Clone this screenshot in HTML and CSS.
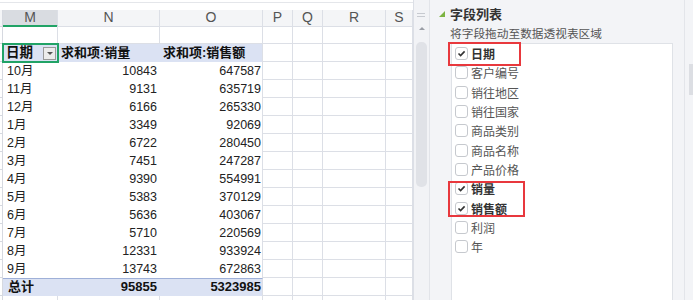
FILE: index.html
```html
<!DOCTYPE html>
<html lang="zh-CN">
<head>
  <meta charset="UTF-8" />
  <title>数据透视表</title>
  <link rel="stylesheet" href="styles.css">
</head>
<body>
<div class="app">

  <div class="sheet">
    <div class="topbar"></div>
    <div class="row colhead">
      <i></i><span class="h sel">M</span><span class="h">N</span><span class="h">O</span><span class="h">P</span><span class="h">Q</span><span class="h">R</span><span class="h">S</span>
    </div>
    <div class="row">
      <i></i><span class="g"></span><span class="g"></span><span class="g"></span><span class="g"></span><span class="g"></span><span class="g"></span><span class="g"></span>
    </div>
    <div class="row">
      <i></i><span class="ph first">日期<b class="drop"></b></span><span class="ph">求和项:销量</span><span class="ph last">求和项:销售额</span><span class="g"></span><span class="g"></span><span class="g"></span><span class="g"></span>
    </div>
    <div class="row"><i></i><span class="pl">10月</span><span class="pn">10843</span><span class="pn last">647587</span><span class="g"></span><span class="g"></span><span class="g"></span><span class="g"></span></div>
    <div class="row"><i></i><span class="pl">11月</span><span class="pn">9131</span><span class="pn last">635719</span><span class="g"></span><span class="g"></span><span class="g"></span><span class="g"></span></div>
    <div class="row"><i></i><span class="pl">12月</span><span class="pn">6166</span><span class="pn last">265330</span><span class="g"></span><span class="g"></span><span class="g"></span><span class="g"></span></div>
    <div class="row"><i></i><span class="pl">1月</span><span class="pn">3349</span><span class="pn last">92069</span><span class="g"></span><span class="g"></span><span class="g"></span><span class="g"></span></div>
    <div class="row"><i></i><span class="pl">2月</span><span class="pn">6722</span><span class="pn last">280450</span><span class="g"></span><span class="g"></span><span class="g"></span><span class="g"></span></div>
    <div class="row"><i></i><span class="pl">3月</span><span class="pn">7451</span><span class="pn last">247287</span><span class="g"></span><span class="g"></span><span class="g"></span><span class="g"></span></div>
    <div class="row"><i></i><span class="pl">4月</span><span class="pn">9390</span><span class="pn last">554991</span><span class="g"></span><span class="g"></span><span class="g"></span><span class="g"></span></div>
    <div class="row"><i></i><span class="pl">5月</span><span class="pn">5383</span><span class="pn last">370129</span><span class="g"></span><span class="g"></span><span class="g"></span><span class="g"></span></div>
    <div class="row"><i></i><span class="pl">6月</span><span class="pn">5636</span><span class="pn last">403067</span><span class="g"></span><span class="g"></span><span class="g"></span><span class="g"></span></div>
    <div class="row"><i></i><span class="pl">7月</span><span class="pn">5710</span><span class="pn last">220569</span><span class="g"></span><span class="g"></span><span class="g"></span><span class="g"></span></div>
    <div class="row"><i></i><span class="pl">8月</span><span class="pn">12331</span><span class="pn last">933924</span><span class="g"></span><span class="g"></span><span class="g"></span><span class="g"></span></div>
    <div class="row"><i></i><span class="pl">9月</span><span class="pn">13743</span><span class="pn last">672863</span><span class="g"></span><span class="g"></span><span class="g"></span><span class="g"></span></div>
    <div class="row total">
      <i></i><span class="pt">总计</span><span class="pt num">95855</span><span class="pt num last">5323985</span><span class="g"></span><span class="g"></span><span class="g"></span><span class="g"></span>
    </div>
    <div class="row">
      <i></i><span class="g"></span><span class="g"></span><span class="g"></span><span class="g"></span><span class="g"></span><span class="g"></span><span class="g"></span>
    </div>
  </div>

  <div class="vscroll">
    <div class="grip"></div>
    <div class="up"></div>
    <div class="thumb"></div>
  </div>

  <div class="panel">
    <div class="title">
      <svg width="6" height="6" viewBox="0 0 6 6"><polygon points="6,0 6,6 0,6" fill="#7cb342"/></svg>
      <span>字段列表</span>
    </div>
    <div class="hint">将字段拖动至数据透视表区域</div>
    <div class="fields">
      <label class="field on"><span class="box"><svg width="11" height="11" viewBox="0 0 11 11"><polyline points="2.5,5.5 4.6,7.6 8.6,3.4" fill="none" stroke="#333" stroke-width="1.6"/></svg></span>日期</label>
      <label class="field"><span class="box"></span>客户编号</label>
      <label class="field"><span class="box"></span>销往地区</label>
      <label class="field"><span class="box"></span>销往国家</label>
      <label class="field"><span class="box"></span>商品类别</label>
      <label class="field"><span class="box"></span>商品名称</label>
      <label class="field"><span class="box"></span>产品价格</label>
      <label class="field on"><span class="box"><svg width="11" height="11" viewBox="0 0 11 11"><polyline points="2.5,5.5 4.6,7.6 8.6,3.4" fill="none" stroke="#333" stroke-width="1.6"/></svg></span>销量</label>
      <label class="field on"><span class="box"><svg width="11" height="11" viewBox="0 0 11 11"><polyline points="2.5,5.5 4.6,7.6 8.6,3.4" fill="none" stroke="#333" stroke-width="1.6"/></svg></span>销售额</label>
      <label class="field"><span class="box"></span>利润</label>
      <label class="field"><span class="box"></span>年</label>
    </div>
    <div class="mark mark-1"></div>
    <div class="mark mark-2"></div>
  </div>

  <div class="rscroll"><div class="thumb"></div></div>

</div>
</body>
</html>
```

FILE: styles.css
```css
body {
  margin: 0;
  font-family: "Liberation Sans", "Noto Sans CJK SC", sans-serif;
  color: #222;
  background: #fff;
  overflow: hidden;
}
.app { display: flex; width: 693px; height: 300px; overflow: hidden; }

/* sheet grid */
.sheet { width: 413px; flex: none; }
.topbar { box-sizing: border-box; border-top: 1px solid #e4e6ea; margin-top: 2px; height: 8px; }
.row {
  display: grid;
  grid-template-columns: 3px 55px 102px 103px 30px 30px 63px 27px;
  height: 18px;
  font-size: 12.5px;
  line-height: 18px;
}
.row > * { box-sizing: border-box; display: block; font-style: normal; white-space: nowrap; }
.row i { border-right: 1px solid #d6d9e0; border-bottom: 1px solid #d6d9e0; }
.g { border-right: 1px solid #dcdfe6; border-bottom: 1px solid #dcdfe6; }

.colhead { height: 16px; line-height: 15px; background: #f4f5f7; }
.colhead i { background: #f4f5f7; }
.h {
  text-align: center;
  font-size: 14px;
  color: #555;
  border-right: 1px solid #dcdfe6;
  border-bottom: 1px solid #dcdfe6;
}
.h.sel { background: #d9dce1; border-bottom: 2px solid #21a366; }

/* pivot */
.ph {
  background: #dbe2f3;
  font-weight: bold;
  font-size: 13px;
  padding-left: 3px;
  color: #111;
}
.ph.first { position: relative; font-size: 13.5px; outline: 2px solid #21a366; outline-offset: -1px; z-index: 1; }
.drop {
  position: absolute;
  left: 40px;
  top: 3px;
  width: 13px;
  height: 13px;
  box-sizing: border-box;
  border: 1px solid #9a9a9a;
  background: #ececec;
}
.drop::after {
  content: "";
  position: absolute;
  left: 3px;
  top: 4px;
  border-left: 3px solid transparent;
  border-right: 3px solid transparent;
  border-top: 3px solid #555;
}
.last { border-right: 1px solid #dcdfe6; }
.pl { padding-left: 4px; color: #222; }
.pn { text-align: right; padding-right: 3px; color: #222; }
.pn.last { padding-right: 1px; }

.total .pt {
  background: #dbe2f3;
  border-top: 1px solid #9fb0d8;
  font-weight: bold;
  font-size: 13px;
  line-height: 16px;
  padding-left: 5px;
  color: #111;
}
.total .num { text-align: right; padding-left: 0; padding-right: 3px; }
.total .num.last { padding-right: 1px; }

/* scroll strip */
.vscroll {
  width: 16px;
  flex: none;
  box-sizing: border-box;
  border-left: 1px solid #dcdfe6;
  background: #f2f3f6;
  position: relative;
}
.grip {
  margin: 13px 0 0 3px;
  width: 8px;
  height: 2px;
  border-top: 1px solid #c7cad0;
  border-bottom: 1px solid #c7cad0;
}
.up {
  margin: 10px 0 0 5px;
  width: 0;
  border-left: 3px solid transparent;
  border-right: 3px solid transparent;
  border-bottom: 3px solid #9a9ea6;
}
.vscroll .thumb {
  position: absolute;
  left: 2px;
  top: 42px;
  width: 11px;
  height: 145px;
  border-radius: 5px;
  background: #e0e2e7;
}

/* field panel */
.panel {
  width: 255px;
  flex: none;
  box-sizing: border-box;
  border-left: 1px solid #e2e4e9;
  background: #f3f4f7;
  position: relative;
}
.title {
  display: flex;
  align-items: center;
  gap: 5px;
  padding: 5px 0 0 9px;
  height: 16px;
  font-size: 13px;
  font-weight: bold;
  color: #333;
}
.title svg { margin-top: 2px; }
.hint {
  margin: 6px 0 0 20px;
  font-size: 11.7px;
  line-height: 14px;
  color: #555;
}
.fields {
  margin: 2px 11px 0 21px;
  height: 260px;
  background: #fff;
  border: 1px solid #dfe2e7;
  border-bottom: none;
  padding-left: 3px;
}
.field {
  display: flex;
  align-items: center;
  height: 19.3px;
  font-size: 12px;
  color: #555;
}
.box {
  display: flex;
  align-items: center;
  justify-content: center;
  width: 13px;
  height: 13px;
  box-sizing: border-box;
  border: 1px solid #c6c9ce;
  border-radius: 3px;
  margin-right: 3px;
}
.field.on { font-weight: bold; color: #333; }

.mark { position: absolute; border: 2px solid #e8383d; box-sizing: border-box; }
.mark-1 { left: 18px; top: 42px; width: 73px; height: 24px; }
.mark-2 { left: 18px; top: 181px; width: 77px; height: 36px; }

.rscroll {
  width: 9px;
  flex: none;
  box-sizing: border-box;
  border-left: 1px solid #e3e5ea;
  background: #f3f4f7;
  position: relative;
}
.rscroll .thumb {
  position: absolute;
  left: 4px;
  top: 64px;
  width: 4px;
  height: 31px;
  background: #dcdee3;
}
```
